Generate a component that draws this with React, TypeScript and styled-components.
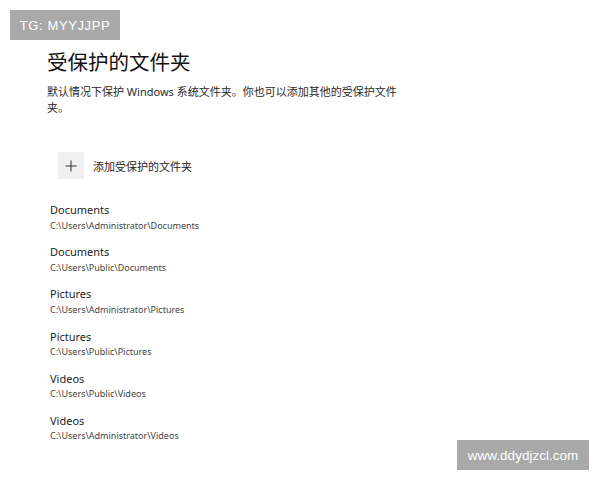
import React from "react";
import styled, { createGlobalStyle } from "styled-components";

const Global = createGlobalStyle`
  html, body { margin: 0; padding: 0; background: #ffffff; }
  body { font-family: "Noto Sans", "Noto Sans CJK SC", sans-serif; }
`;

const Page = styled.div`
  position: relative;
  width: 600px;
  height: 480px;
  overflow: hidden;
  background: #ffffff;
  box-sizing: border-box;
  padding: 47px 0 0 47px;
`;

const Watermark = styled.div<{ $corner: "tl" | "br" }>`
  position: absolute;
  ${(p) =>
    p.$corner === "tl"
      ? "left: 10px; top: 10px; width: 110px; height: 30px;"
      : "left: 457px; top: 440px; width: 132px; height: 30px;"}
  background: #a9a9a9;
  color: #ffffff;
  display: flex;
  align-items: center;
  justify-content: center;
  font-family: "Liberation Sans", Arial, sans-serif;
  font-size: ${(p) => (p.$corner === "tl" ? "13px" : "13.5px")};
  letter-spacing: ${(p) => (p.$corner === "tl" ? "0.6px" : "0")};
`;

const Title = styled.h1`
  margin: 0;
  font-family: "Noto Sans CJK SC", sans-serif;
  font-weight: 400;
  font-size: 20.5px;
  line-height: 28px;
  color: #111111;
`;

const Description = styled.p`
  margin: 9px 0 0 0;
  width: 352px;
  font-family: "Noto Sans", "Noto Sans CJK SC", sans-serif;
  font-size: 11px;
  line-height: 16px;
  color: #2a2a2a;
`;

const AddRow = styled.button`
  margin: 36px 0 0 11px;
  padding: 0;
  border: none;
  background: none;
  display: flex;
  align-items: center;
  gap: 9px;
  cursor: pointer;
`;

const AddTile = styled.span`
  width: 26px;
  height: 27px;
  background: #f0f0f0;
  display: flex;
  align-items: center;
  justify-content: center;
  color: #333333;
`;

const AddLabel = styled.span`
  font-family: "Noto Sans CJK SC", sans-serif;
  font-size: 11px;
  color: #1e1e1e;
`;

const List = styled.div`
  margin: 24px 0 0 3px;
  display: flex;
  flex-direction: column;
  gap: 12.7px;
`;

const Item = styled.div`
  display: flex;
  flex-direction: column;
`;

const Name = styled.div`
  font-size: 11px;
  line-height: 14px;
  color: #1e1e1e;
`;

const Path = styled.div`
  font-size: 9px;
  line-height: 15px;
  padding-top: 0.5px;
  color: #444444;
`;

const folders = [
  { name: "Documents", path: "C:\\Users\\Administrator\\Documents" },
  { name: "Documents", path: "C:\\Users\\Public\\Documents" },
  { name: "Pictures", path: "C:\\Users\\Administrator\\Pictures" },
  { name: "Pictures", path: "C:\\Users\\Public\\Pictures" },
  { name: "Videos", path: "C:\\Users\\Public\\Videos" },
  { name: "Videos", path: "C:\\Users\\Administrator\\Videos" },
];

export default function App() {
  return (
    <Page>
      <Global />
      <Title>受保护的文件夹</Title>
      <Description>
        默认情况下保护 Windows 系统文件夹。你也可以添加其他的受保护文件夹。
      </Description>
      <AddRow>
        <AddTile>
          <svg width="12" height="12" viewBox="0 0 12 12">
            <path d="M6 0.5V11.5M0.5 6H11.5" stroke="#333" strokeWidth="1" fill="none" />
          </svg>
        </AddTile>
        <AddLabel>添加受保护的文件夹</AddLabel>
      </AddRow>
      <List>
        {folders.map((f, i) => (
          <Item key={i}>
            <Name>{f.name}</Name>
            <Path>{f.path}</Path>
          </Item>
        ))}
      </List>
      <Watermark $corner="tl">TG: MYYJJPP</Watermark>
      <Watermark $corner="br">www.ddydjzcl.com</Watermark>
    </Page>
  );
}
